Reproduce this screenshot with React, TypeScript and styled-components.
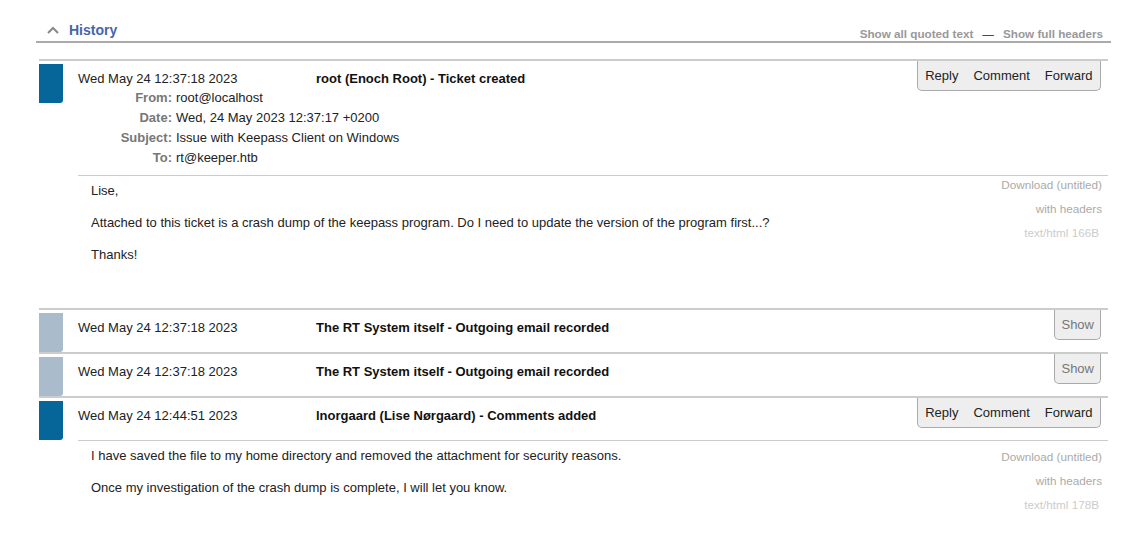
import styled, { createGlobalStyle } from 'styled-components';

const GlobalStyle = createGlobalStyle`
  body {
    margin: 0;
    background: #fff;
    font-family: 'Liberation Sans', Arial, sans-serif;
    font-size: 13px;
    color: #222;
  }
`;

const Page = styled.div`
  padding-top: 20px;
`;

const TitleBar = styled.div`
  display: flex;
  align-items: flex-end;
  justify-content: space-between;
  margin: 0 32px 0 36px;
  border-bottom: 2px solid #aaa;
`;

const Title = styled.div`
  display: flex;
  align-items: center;
  gap: 10px;
  padding: 0 0 1px 11px;
  font-size: 14px;
  font-weight: bold;
  line-height: 20px;
  color: #4566ac;
`;

const TitleLinks = styled.div`
  display: flex;
  gap: 9px;
  padding-right: 8px;
  font-size: 11.7px;
  font-weight: bold;
  line-height: 14px;
  color: #999;
`;

const Dash = styled.span`
  font-weight: normal;
  color: #222;
`;

const List = styled.div`
  margin: 16px 35px 0 39px;
`;

const Transaction = styled.div`
  position: relative;
  display: grid;
  grid-template-columns: 24px 1fr;
  column-gap: 15px;
  border-top: 2px solid #ccc;
`;

const TypeBar = styled.div<{ $muted?: boolean }>`
  height: 39px;
  margin-top: 3px;
  border-radius: 0 0 3px 0;
  background: ${p => (p.$muted ? '#aabbcc' : '#066699')};
`;

const Content = styled.div`
  min-width: 0;
`;

const Meta = styled.div<{ $tight?: boolean }>`
  display: flex;
  padding: 9px 0 ${p => (p.$tight ? 0 : 15)}px;
  line-height: 18px;
`;

const When = styled.span`
  width: 238px;
`;

const Description = styled.span`
  font-weight: bold;
  color: #111;
`;

const Headers = styled.div`
  display: grid;
  grid-template-columns: 94px 1fr;
  column-gap: 4px;
  padding-bottom: 7px;
  line-height: 20px;
`;

const Label = styled.span`
  text-align: right;
  font-weight: bold;
  color: #777;
`;

const Message = styled.div`
  display: flex;
  justify-content: space-between;
  border-top: 1px solid #ccc;
`;

const MessageText = styled.div`
  padding: 7px 0 45px 13px;

  p {
    margin: 0 0 16px;
    line-height: 16px;
  }

  p:last-child {
    margin-bottom: 0;
  }
`;

const Attachments = styled.div<{ $top: number }>`
  display: flex;
  flex-direction: column;
  align-items: flex-end;
  gap: 8px;
  padding: ${p => p.$top}px 6px 0 0;
  font-size: 11.7px;
  line-height: 16px;
  color: #aaa;
`;

const Mime = styled.span`
  padding-right: 3px;
  color: #ccc;
`;

const Tools = styled.div`
  position: absolute;
  top: 0;
  right: 7px;
  display: flex;
  align-items: center;
  height: 29px;
  background: #eee;
  border: 1px solid #aaa;
  border-top: none;
  border-radius: 0 0 5px 5px;
`;

const ToolLink = styled.span<{ $muted?: boolean }>`
  padding: 0 ${p => (p.$muted ? 6 : 7.5)}px;
  color: ${p => (p.$muted ? '#777' : '#222')};
`;

const Chevron = () => (
  <svg width="12" height="8" viewBox="0 0 12 8">
    <polyline points="1,7 6,2 11,7" fill="none" stroke="#888" strokeWidth="2" />
  </svg>
);

type Attachment = { size: string; top: number };

const Actions = () => (
  <Tools>
    <ToolLink>Reply</ToolLink>
    <ToolLink>Comment</ToolLink>
    <ToolLink>Forward</ToolLink>
  </Tools>
);

const AttachmentInfo = ({ size, top }: Attachment) => (
  <Attachments $top={top}>
    <span>Download (untitled)</span>
    <span>with headers</span>
    <Mime>text/html {size}</Mime>
  </Attachments>
);

const Collapsed = ({ when, text }: { when: string; text: string }) => (
  <Transaction>
    <TypeBar $muted />
    <Content>
      <Meta>
        <When>{when}</When>
        <Description>{text}</Description>
      </Meta>
    </Content>
    <Tools>
      <ToolLink $muted>Show</ToolLink>
    </Tools>
  </Transaction>
);

const headers = [
  ['From:', 'root@localhost'],
  ['Date:', 'Wed, 24 May 2023 12:37:17 +0200'],
  ['Subject:', 'Issue with Keepass Client on Windows'],
  ['To:', 'rt@keeper.htb'],
];

export default function App() {
  return (
    <Page>
      <GlobalStyle />
      <TitleBar>
        <Title>
          <Chevron />
          History
        </Title>
        <TitleLinks>
          <span>Show all quoted text</span>
          <Dash>—</Dash>
          <span>Show full headers</span>
        </TitleLinks>
      </TitleBar>

      <List>
        <Transaction>
          <TypeBar />
          <Content>
            <Meta $tight>
              <When>Wed May 24 12:37:18 2023</When>
              <Description>root (Enoch Root) - Ticket created</Description>
            </Meta>
            <Headers>
              {headers.map(([label, value]) => (
                <>
                  <Label key={label}>{label}</Label>
                  <span>{value}</span>
                </>
              ))}
            </Headers>
            <Message>
              <MessageText>
                <p>Lise,</p>
                <p>
                  Attached to this ticket is a crash dump of the keepass program. Do I need to
                  update the version of the program first...?
                </p>
                <p>Thanks!</p>
              </MessageText>
              <AttachmentInfo size="166B" top={1} />
            </Message>
          </Content>
          <Actions />
        </Transaction>

        <Collapsed
          when="Wed May 24 12:37:18 2023"
          text="The RT System itself - Outgoing email recorded"
        />
        <Collapsed
          when="Wed May 24 12:37:18 2023"
          text="The RT System itself - Outgoing email recorded"
        />

        <Transaction>
          <TypeBar />
          <Content>
            <Meta>
              <When>Wed May 24 12:44:51 2023</When>
              <Description>lnorgaard (Lise Nørgaard) - Comments added</Description>
            </Meta>
            <Message>
              <MessageText>
                <p>
                  I have saved the file to my home directory and removed the attachment for
                  security reasons.
                </p>
                <p>Once my investigation of the crash dump is complete, I will let you know.</p>
              </MessageText>
              <AttachmentInfo size="178B" top={8} />
            </Message>
          </Content>
          <Actions />
        </Transaction>
      </List>
    </Page>
  );
}
